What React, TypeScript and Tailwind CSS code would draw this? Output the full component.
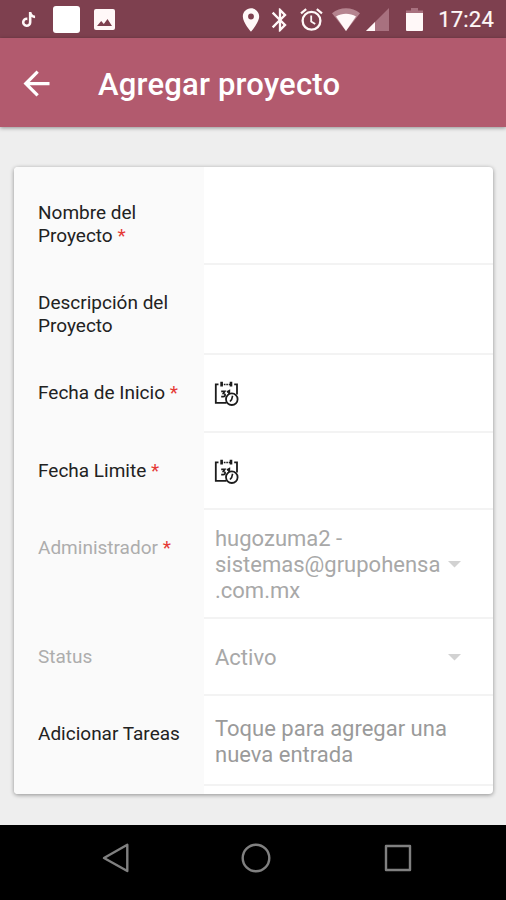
import type { ReactNode } from "react";
import { FaTiktok } from "react-icons/fa6";
import { MdArrowBack, MdBluetooth, MdLocationOn } from "react-icons/md";

interface FormRowProps {
  label: string[];
  required?: boolean;
  disabled?: boolean;
  labelTop?: string;
  height: string;
  children?: ReactNode;
}

function FormRow({ label, required, disabled, labelTop = "pt-[27px]", height, children }: FormRowProps) {
  return (
    <div className={`flex ${height}`}>
      <div
        className={`w-[190px] shrink-0 bg-[#fafafa] pl-6 text-[19px] leading-[22.5px] ${labelTop} ${
          disabled ? "text-[#adadad]" : "text-[#222222]"
        }`}
      >
        {label.map((line, i) => (
          <p key={line} className="whitespace-nowrap">
            {line}
            {required && i === label.length - 1 && <span className="text-[#e53935]"> *</span>}
          </p>
        ))}
      </div>
      <div className="flex flex-1 items-center border-b-2 border-[#f3f3f3] pt-[2px] pl-[11px] text-[22px] leading-[26px] text-[#a8a8a8]">
        {children}
      </div>
    </div>
  );
}

function CalendarIcon() {
  return (
    <svg className="-ml-px" width="26" height="26" viewBox="0 0 26 26" fill="none" stroke="#1c1c1c">
      <path d="M4.5 3.4H1.8V21.8H12.5M20.2 3.4H23V13.5" strokeWidth="1.8" />
      <path d="M7.5 3.4H17" strokeWidth="1.5" strokeDasharray="1.6 0.8" />
      <path d="M7.6 0.8V5.4M17 0.8V5.4" strokeWidth="2.6" />
      <path d="M7.2 10.3H10.8L9.3 12.5C12 12.8 11.5 15.6 9.3 15.6H7.2" strokeWidth="1.7" />
      <path d="M13 11.2L15.2 10V14" strokeWidth="2" />
      <circle cx="17.8" cy="18.2" r="5.8" fill="#fff" strokeWidth="1.8" />
      <path d="M18.6 14.8L17.6 18.6L16 20.6" strokeWidth="1.6" />
    </svg>
  );
}

function AlarmIcon() {
  return (
    <svg width="23" height="23" viewBox="0 0 23 23" fill="none" stroke="currentColor">
      <circle cx="11.5" cy="12.8" r="8.9" strokeWidth="2.3" />
      <path d="M1 5.4L6.2 1.1M22 5.4L16.8 1.1" strokeWidth="2.2" />
      <path d="M11.2 7.6V13.4L15.2 16" strokeWidth="1.8" />
    </svg>
  );
}

function ImageIcon() {
  return (
    <svg width="21" height="21" viewBox="0 0 21 21">
      <rect width="21" height="21" rx="2" fill="currentColor" />
      <path d="M3 17L7.2 12L9.8 15L13.5 10L18 17Z" fill="#7e404f" />
    </svg>
  );
}

function Caret() {
  return (
    <svg className="ml-px shrink-0" width="13" height="7" viewBox="0 0 13 7">
      <path d="M0 0H13L6.5 6.5Z" fill="#d2d2d2" />
    </svg>
  );
}

function StatusBar() {
  return (
    <div className="flex h-[38px] items-center bg-[#7e404f] pt-px pr-3 pl-[21px] text-[#fff8f8]">
      <FaTiktok size={15} />
      <div className="mr-[14px] ml-[17px] size-[27px] rounded-[3px] bg-white" />
      <ImageIcon />
      <div className="ml-auto flex items-center">
        <MdLocationOn size={28} />
        <MdBluetooth size={28} className="mr-[6px] ml-px" />
        <AlarmIcon />
        <svg className="ml-[9px]" width="28" height="23" viewBox="0 0 28 23">
          <path d="M0 5.2C8 -1.4 20 -1.4 28 5.2L14 23Z" fill="#b5848f" />
          <path d="M4 8.5C10 4.8 18 4.8 24 8.5L14 23Z" fill="currentColor" />
        </svg>
        <svg className="ml-[6px]" width="23" height="23" viewBox="0 0 23 23">
          <path d="M23 0V23H0Z" fill="#a8717f" />
          <path d="M9 14V23H0Z" fill="currentColor" />
        </svg>
        <svg className="ml-[17px]" width="17" height="23" viewBox="0 0 17 23">
          <path d="M0 5V2.5H5V0H12V2.5H17V5Z" fill="#a8717f" />
          <path d="M0 5H17V22Q17 23 16 23H1Q0 23 0 22Z" fill="currentColor" />
        </svg>
        <span className="ml-[15px] pt-px text-[22px] leading-none tracking-[0.2px] [-webkit-text-stroke:0.2px]">17:24</span>
      </div>
    </div>
  );
}

export default function App() {
  return (
    <div className="flex h-[900px] w-[506px] flex-col overflow-hidden bg-[#eeeeee] font-['Roboto',sans-serif]">
      <StatusBar />
      <header className="flex h-[89px] shrink-0 items-center bg-[#b25a6e] pt-px pl-[17px] text-white shadow-[0_1px_4px_rgba(0,0,0,0.4)]">
        <MdArrowBack size={39} />
        <h1 className="ml-[42px] pt-[3px] text-[31px] leading-none font-medium tracking-[0.2px]">Agregar proyecto</h1>
      </header>

      <main className="flex-1 px-[13px] pt-10">
        <div className="ml-px h-[627px] w-[479px] overflow-hidden rounded-[4px] bg-white shadow-[0_1px_4px_rgba(0,0,0,0.4)]">
          <FormRow label={["Nombre del", "Proyecto"]} required labelTop="pt-[35px]" height="h-[98px]" />
          <FormRow label={["Descripción del", "Proyecto"]} height="h-[90px]" />
          <FormRow label={["Fecha de Inicio"]} required height="h-[78px]">
            <CalendarIcon />
          </FormRow>
          <FormRow label={["Fecha Limite"]} required height="h-[77px]">
            <CalendarIcon />
          </FormRow>
          <FormRow label={["Administrador"]} required disabled height="h-[109px]">
            <p className="w-[232px]">
              hugozuma2 -<br />
              sistemas@grupohensa<br />
              .com.mx
            </p>
            <Caret />
          </FormRow>
          <FormRow label={["Status"]} disabled height="h-[77px]">
            <p className="w-[232px]">Activo</p>
            <Caret />
          </FormRow>
          <FormRow label={["Adicionar Tareas"]} height="h-[90px]">
            <p className="pt-[2px] text-[#9a9a9a]">
              Toque para agregar una<br />
              nueva entrada
            </p>
          </FormRow>
          <div className="h-2 w-[190px] bg-[#fafafa]" />
        </div>
      </main>

      <nav className="flex h-[75px] items-center bg-black pb-[9px] pl-[102px]">
        <svg className="-mt-px" width="27" height="30" viewBox="0 0 27 30" fill="none" stroke="#808080" strokeWidth="2.4" strokeLinejoin="round">
          <path d="M25.3 1.8V28L2 15Z" />
        </svg>
        <svg className="ml-[112px]" width="30" height="30" viewBox="0 0 30 30" fill="none" stroke="#808080" strokeWidth="2.4">
          <circle cx="15" cy="15" r="13.3" />
        </svg>
        <svg className="ml-[113px]" width="28" height="28" viewBox="0 0 28 28" fill="none" stroke="#808080" strokeWidth="2.4" strokeLinejoin="round">
          <rect x="2" y="2" width="24" height="24" />
        </svg>
      </nav>
    </div>
  );
}
